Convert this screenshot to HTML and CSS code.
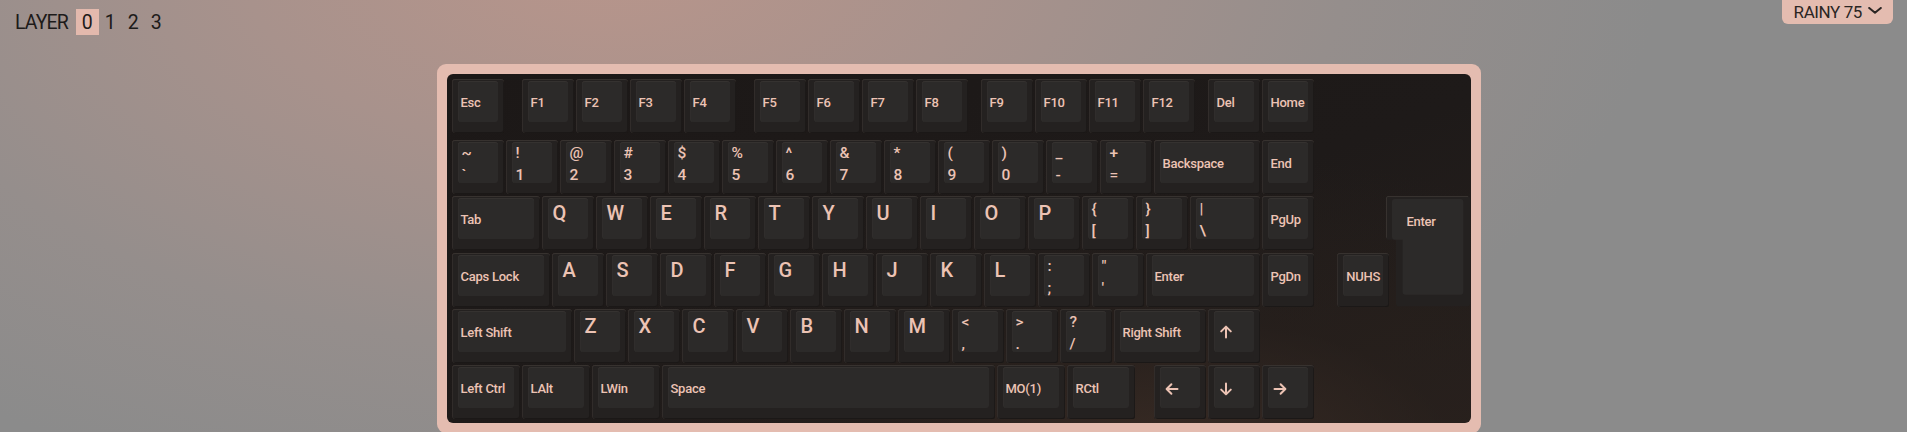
FILE: index.html
```html
<!DOCTYPE html>
<html lang="en">
<head>
<meta charset="utf-8">
<title>Rainy 75 Layout</title>
<link rel="stylesheet" href="styles.css">
</head>
<body>
<div class="page">
  <header class="topbar">
    <div class="layers">
      <span class="layers-label">LAYER</span>
      <span class="layer-btn active">0</span>
      <span class="layer-btn">1</span>
      <span class="layer-btn">2</span>
      <span class="layer-btn">3</span>
    </div>
    <div class="board-btn">
      <span>RAINY 75</span>
      <svg class="chev" width="14" height="7" viewBox="0 0 14 7"><path d="M1.2 1 L7 5.8 L12.8 1" fill="none" stroke="#2a2523" stroke-width="2" stroke-linecap="round" stroke-linejoin="round"/></svg>
    </div>
  </header>

  <div class="stage">
    <div class="case">
      <div class="plate">
        <!-- Function row -->
        <div class="row frow">
          <div class="key"><div class="face mod">Esc</div></div>
          <div class="key gap16"><div class="face mod">F1</div></div>
          <div class="key"><div class="face mod">F2</div></div>
          <div class="key"><div class="face mod">F3</div></div>
          <div class="key"><div class="face mod">F4</div></div>
          <div class="key gap16"><div class="face mod">F5</div></div>
          <div class="key"><div class="face mod">F6</div></div>
          <div class="key"><div class="face mod">F7</div></div>
          <div class="key"><div class="face mod">F8</div></div>
          <div class="key gap11"><div class="face mod">F9</div></div>
          <div class="key"><div class="face mod">F10</div></div>
          <div class="key"><div class="face mod">F11</div></div>
          <div class="key"><div class="face mod">F12</div></div>
          <div class="key gap11"><div class="face mod">Del</div></div>
          <div class="key"><div class="face mod">Home</div></div>
        </div>

        <!-- Number row -->
        <div class="row">
          <div class="key"><div class="face dual"><span>~</span><span>`</span></div></div>
          <div class="key"><div class="face dual"><span>!</span><span>1</span></div></div>
          <div class="key"><div class="face dual"><span>@</span><span>2</span></div></div>
          <div class="key"><div class="face dual"><span>#</span><span>3</span></div></div>
          <div class="key"><div class="face dual"><span>$</span><span>4</span></div></div>
          <div class="key"><div class="face dual"><span>%</span><span>5</span></div></div>
          <div class="key"><div class="face dual"><span>^</span><span>6</span></div></div>
          <div class="key"><div class="face dual"><span>&amp;</span><span>7</span></div></div>
          <div class="key"><div class="face dual"><span>*</span><span>8</span></div></div>
          <div class="key"><div class="face dual"><span>(</span><span>9</span></div></div>
          <div class="key"><div class="face dual"><span>)</span><span>0</span></div></div>
          <div class="key"><div class="face dual"><span>_</span><span>-</span></div></div>
          <div class="key"><div class="face dual"><span>+</span><span>=</span></div></div>
          <div class="key w-bksp"><div class="face mod">Backspace</div></div>
          <div class="key"><div class="face mod">End</div></div>
        </div>

        <!-- QWERTY row -->
        <div class="row">
          <div class="key w-tab"><div class="face mod">Tab</div></div>
          <div class="key"><div class="face letter">Q</div></div>
          <div class="key"><div class="face letter">W</div></div>
          <div class="key"><div class="face letter">E</div></div>
          <div class="key"><div class="face letter">R</div></div>
          <div class="key"><div class="face letter">T</div></div>
          <div class="key"><div class="face letter">Y</div></div>
          <div class="key"><div class="face letter">U</div></div>
          <div class="key"><div class="face letter">I</div></div>
          <div class="key"><div class="face letter">O</div></div>
          <div class="key"><div class="face letter">P</div></div>
          <div class="key"><div class="face dual"><span>{</span><span>[</span></div></div>
          <div class="key"><div class="face dual"><span>}</span><span>]</span></div></div>
          <div class="key w-pipe"><div class="face dual"><span>|</span><span>\</span></div></div>
          <div class="key"><div class="face mod">PgUp</div></div>
          <div class="iso-enter">
            <svg class="iso-shape" width="84" height="111" viewBox="0 0 84 111">
              <path class="iso-outer" d="M2 0 H82 Q84 0 84 2 V108 Q84 110.3 82 110.3 H12 Q10 110.3 10 108 V43.7 H2 Q0 43.7 0 41.7 V2 Q0 0 2 0 Z"/>
              <path class="iso-edge" d="M0.5 41.7 V2 Q0.5 0.5 2 0.5 H82"/>
              <path class="iso-face" d="M9 3 H74.5 Q77.3 3 77.3 6 V95.7 Q77.3 98.7 74.5 98.7 H19.6 Q16.6 98.7 16.6 95.7 V43.7 H9 Q6 43.7 6 40.7 V6 Q6 3 9 3 Z"/>
            </svg>
            <span class="iso-label">Enter</span>
          </div>
        </div>

        <!-- Home row -->
        <div class="row">
          <div class="key w-caps"><div class="face mod">Caps Lock</div></div>
          <div class="key"><div class="face letter">A</div></div>
          <div class="key"><div class="face letter">S</div></div>
          <div class="key"><div class="face letter">D</div></div>
          <div class="key"><div class="face letter">F</div></div>
          <div class="key"><div class="face letter">G</div></div>
          <div class="key"><div class="face letter">H</div></div>
          <div class="key"><div class="face letter">J</div></div>
          <div class="key"><div class="face letter">K</div></div>
          <div class="key"><div class="face letter">L</div></div>
          <div class="key"><div class="face dual"><span>:</span><span>;</span></div></div>
          <div class="key"><div class="face dual"><span>"</span><span>'</span></div></div>
          <div class="key w-enter"><div class="face mod">Enter</div></div>
          <div class="key"><div class="face mod">PgDn</div></div>
          <div class="key gap-nuhs"><div class="face mod">NUHS</div></div>
        </div>

        <!-- Shift row -->
        <div class="row">
          <div class="key w-lshift"><div class="face mod">Left Shift</div></div>
          <div class="key"><div class="face letter">Z</div></div>
          <div class="key"><div class="face letter">X</div></div>
          <div class="key"><div class="face letter">C</div></div>
          <div class="key"><div class="face letter">V</div></div>
          <div class="key"><div class="face letter">B</div></div>
          <div class="key"><div class="face letter">N</div></div>
          <div class="key"><div class="face letter">M</div></div>
          <div class="key"><div class="face dual"><span>&lt;</span><span>,</span></div></div>
          <div class="key"><div class="face dual"><span>&gt;</span><span>.</span></div></div>
          <div class="key"><div class="face dual"><span>?</span><span>/</span></div></div>
          <div class="key w-rshift"><div class="face mod">Right Shift</div></div>
          <div class="key"><div class="face mod"><svg class="arrow" width="14" height="14" viewBox="0 0 14 14"><path d="M7 12.5 V1.8 M2.2 6.4 L7 1.6 L11.8 6.4"/></svg></div></div>
        </div>

        <!-- Bottom row -->
        <div class="row">
          <div class="key w-mod"><div class="face mod">Left Ctrl</div></div>
          <div class="key w-mod"><div class="face mod">LAlt</div></div>
          <div class="key w-mod"><div class="face mod">LWin</div></div>
          <div class="key w-space"><div class="face mod">Space</div></div>
          <div class="key w-mod"><div class="face mod">MO(1)</div></div>
          <div class="key w-mod"><div class="face mod">RCtl</div></div>
          <div class="key gap-arrows"><div class="face mod"><svg class="arrow" width="14" height="14" viewBox="0 0 14 14"><path d="M12.5 7 H1.8 M6.4 2.2 L1.6 7 L6.4 11.8"/></svg></div></div>
          <div class="key"><div class="face mod"><svg class="arrow" width="14" height="14" viewBox="0 0 14 14"><path d="M7 1.5 V12.2 M2.2 7.6 L7 12.4 L11.8 7.6"/></svg></div></div>
          <div class="key"><div class="face mod"><svg class="arrow" width="14" height="14" viewBox="0 0 14 14"><path d="M1.5 7 H12.2 M7.6 2.2 L12.4 7 L7.6 11.8"/></svg></div></div>
        </div>
      </div>
    </div>
  </div>
</div>
</body>
</html>
```

FILE: styles.css
```css
* { box-sizing: border-box; }

html, body {
  margin: 0;
  padding: 0;
}

body {
  width: 1907px;
  height: 432px;
  overflow: hidden;
  font-family: Roboto, "Noto Sans", "DejaVu Sans", sans-serif;
  background:
    radial-gradient(ellipse 1050px 560px at 610px -40px, #b8958b 0%, #a8928c 35%, #958e8c 70%, #8b8b8b 100%);
  background-color: #8b8b8b;
}

.page {
  display: flex;
  flex-direction: column;
  height: 432px;
}

/* ---------- top bar ---------- */
.topbar {
  height: 64px;
  display: flex;
  justify-content: space-between;
  align-items: flex-start;
  padding: 0 14px 0 15px;
  flex: none;
}

.layers {
  display: flex;
  align-items: center;
  margin-top: 9px;
  font-size: 19.5px;
  color: #1d1b1a;
}

.layers-label {
  letter-spacing: -0.9px;
  margin-right: 8px;
}

.layer-btn {
  width: 23px;
  height: 26px;
  display: flex;
  align-items: center;
  justify-content: center;
}

.layer-btn.active {
  background: #e3b9ad;
}

.board-btn {
  height: 24px;
  display: flex;
  align-items: center;
  gap: 6px;
  padding: 0 11px 1px 12px;
  background: #e4bcb0;
  border-radius: 0 0 6px 6px;
  font-size: 17px;
  color: #2a2523;
  letter-spacing: -0.4px;
}

.chev {
  display: block;
  margin-top: -2px;
}

/* ---------- keyboard ---------- */
.stage {
  display: flex;
  justify-content: center;
  padding-left: 10px;
}

.case {
  background: #e4bcb0;
  padding: 10px;
  border-radius: 9px;
}

.plate {
  display: flex;
  flex-direction: column;
  gap: 2.3px;
  width: 1024px;
  padding: 4.7px 1px 3.8px 5px;
  border-radius: 6px;
  background:
    radial-gradient(ellipse 640px 300px at 70% 108%, rgba(58, 44, 37, 0.9) 0%, rgba(40, 32, 28, 0.5) 45%, rgba(29, 25, 24, 0) 100%),
    linear-gradient(160deg, #1c1817 0%, #1e1a19 55%, #27201d 100%);
}

.row {
  display: flex;
  gap: 2px;
  height: 54px;
  flex: none;
  align-items: flex-start;
}

.row.frow {
  margin-bottom: 5px;
}

.key {
  flex: none;
  width: 52px;
  height: 54px;
  padding: 2px 6px 11px 6px;
  background: #242120;
  border-radius: 3px;
  box-shadow:
    inset 0 1px 0 #37322f,
    inset 1px 0 0 #312c2a,
    inset -1px 0 0 #1c1918,
    inset 0 -1px 0 #1b1817;
}

.face {
  height: 100%;
  background: #2c2a29;
  border-radius: 3px;
  box-shadow:
    inset 0 1px 0 #353230,
    inset 1px 0 0 #302d2c;
  color: #ecc3b4;
  font-weight: 500;
  white-space: nowrap;
  overflow: visible;
}

.face.mod {
  display: flex;
  align-items: center;
  padding: 2px 3px 0 3px;
  font-size: 13px;
  letter-spacing: -0.25px;
}

.face.letter {
  padding: 3px 4px 0 5px;
  font-size: 20px;
  line-height: 24px;
}

.face.dual {
  display: flex;
  flex-direction: column;
  padding: 0 4px;
  font-size: 15.5px;
  line-height: 22px;
}

.arrow {
  display: block;
  margin-left: 2px;
  fill: none;
  stroke: #ecc3b4;
  stroke-width: 2;
  stroke-linecap: round;
  stroke-linejoin: round;
}

/* widths (pitch minus 2px gap) */
.w-bksp   { width: 106px; }
.w-tab    { width: 88px; }
.w-pipe   { width: 70px; }
.w-caps   { width: 98px; }
.w-enter  { width: 114px; }
.w-lshift { width: 120px; }
.w-rshift { width: 92px; }
.w-mod    { width: 68px; }
.w-space  { width: 333px; }

/* spacers between clusters */
.gap16 { margin-left: 16px; }
.gap11 { margin-left: 11px; }
.gap-arrows { margin-left: 17px; }
.gap-nuhs { margin-left: 21.7px; }

/* ISO enter spanning two rows */
.iso-enter {
  flex: none;
  position: relative;
  width: 84px;
  height: 110.3px;
  margin-left: 70.3px;
}

.iso-shape {
  display: block;
}

.iso-outer { fill: #242120; }
.iso-edge { fill: none; stroke: #37322f; stroke-width: 1; }
.iso-face { fill: #2c2a29; }

.iso-label {
  position: absolute;
  left: 20.6px;
  top: 17px;
  font-size: 13px;
  font-weight: 500;
  letter-spacing: -0.25px;
  color: #ecc3b4;
  line-height: 17px;
}
```
